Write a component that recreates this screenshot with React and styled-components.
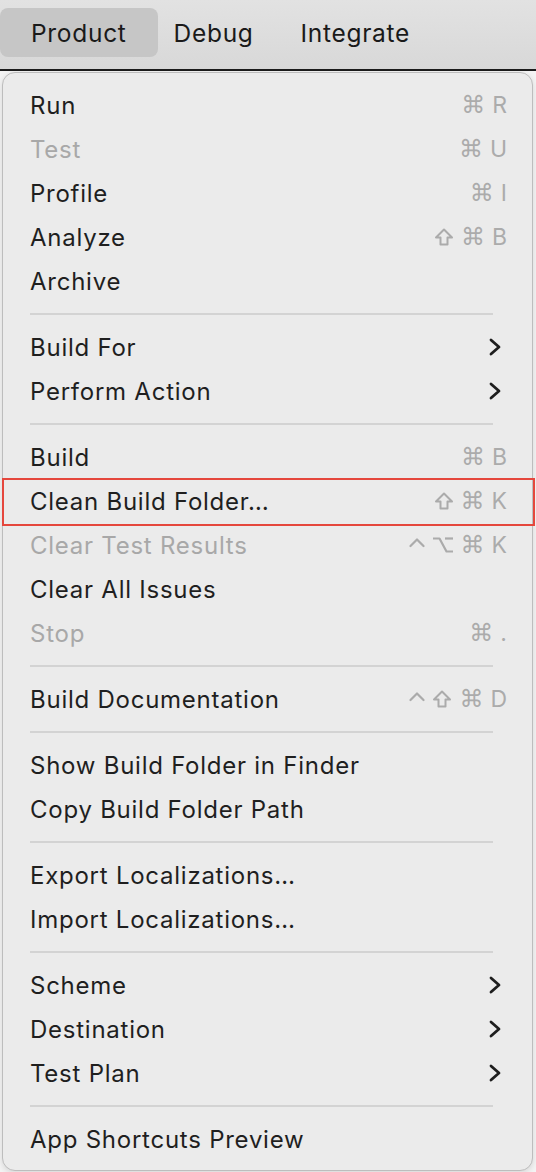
import React from "react";
import styled, { createGlobalStyle } from "styled-components";

const Global = createGlobalStyle`
  html, body { margin: 0; padding: 0; }
  body {
    background: #f4f4f4;
    font-family: Inter, "Noto Sans", "Liberation Sans", sans-serif;
    -webkit-font-smoothing: antialiased;
  }
`;

const Page = styled.div`
  width: 536px;
  height: 1172px;
  overflow: hidden;
  display: flex;
  flex-direction: column;
  background: #f4f4f4;
`;

const MenuBar = styled.div`
  height: 71px;
  flex: none;
  display: flex;
  align-items: flex-start;
  background: linear-gradient(#e2e2e2, #d8d8d8);
  border-bottom: 2px solid #1c1c1c;
  box-sizing: border-box;
  padding-top: 8px;
`;

const BarItem = styled.div`
  height: 49px;
  display: flex;
  align-items: center;
  padding: 0 ${(p) => p.$pad}px;
  margin-left: ${(p) => p.$gap}px;
  border-radius: 8px;
  font-size: 24.5px;
  color: #1a1a1a;
  letter-spacing: 0.7px;
  background: ${(p) => (p.$active ? "#c6c6c6" : "transparent")};
`;

const Panel = styled.div`
  margin: 1px 0 0 2px;
  width: 531px;
  box-sizing: border-box;
  background: #ebebeb;
  border: 1px solid #bdbdbd;
  border-radius: 13px;
  padding: 10px 0 9px;
  display: flex;
  flex-direction: column;
  box-shadow: 0 2px 6px rgba(0, 0, 0, 0.12);
`;

const Row = styled.div`
  position: relative;
  height: 44px;
  display: flex;
  align-items: center;
  padding: 0 25px 0 27px;
  font-size: 24px;
  letter-spacing: 0.75px;
  color: ${(p) => (p.$disabled ? "#a8a8a8" : "#1f1f1f")};
  &::after {
    content: "";
    display: ${(p) => (p.$marked ? "block" : "none")};
    position: absolute;
    left: -1px;
    right: -3px;
    top: -1px;
    bottom: -3px;
    border: 2px solid #e5473d;
  }
`;

const Label = styled.span`
  flex: 1;
  white-space: nowrap;
`;

const Shortcut = styled.span`
  display: flex;
  align-items: center;
  gap: 7px;
  color: #ababab;
  font-size: 23px;
  letter-spacing: 0;
`;

const Glyph = styled.span`
  font-family: "DejaVu Sans", sans-serif;
  font-size: ${(p) => p.$size || 20}px;
  line-height: 1;
`;

const Separator = styled.div`
  height: 2px;
  margin: 10px 39px 10px 27px;
  background: #d3d3d3;
`;

const Chevron = () => (
  <svg width="14" height="20" viewBox="0 0 14 20" style={{ marginRight: 5 }}>
    <polyline
      points="3,3 11,10 3,17"
      fill="none"
      stroke="#1e1e1e"
      strokeWidth="2.8"
      strokeLinecap="round"
      strokeLinejoin="round"
    />
  </svg>
);

const ShiftIcon = () => (
  <svg width="20" height="20" viewBox="0 0 20 20">
    <path
      d="M10 2.5 L18 10.5 H13.5 V17.5 H6.5 V10.5 H2 Z"
      fill="none"
      stroke="#ababab"
      strokeWidth="2"
      strokeLinejoin="round"
    />
  </svg>
);

const CtrlIcon = () => (
  <svg width="16" height="20" viewBox="0 0 16 20">
    <polyline
      points="1.5,11 8,4.5 14.5,11"
      fill="none"
      stroke="#ababab"
      strokeWidth="2.2"
      strokeLinecap="round"
      strokeLinejoin="round"
    />
  </svg>
);

const OptIcon = () => (
  <svg width="22" height="20" viewBox="0 0 22 20">
    <polyline
      points="1,3.5 7.5,3.5 14.5,16.5 21,16.5"
      fill="none"
      stroke="#ababab"
      strokeWidth="2.2"
      strokeLinejoin="round"
    />
    <line x1="13" y1="3.5" x2="21" y2="3.5" stroke="#ababab" strokeWidth="2.2" />
  </svg>
);

const keyFor = (k, i) => {
  if (k === "shift") return <ShiftIcon key={i} />;
  if (k === "cmd") return <Glyph key={i} $size={24}>⌘</Glyph>;
  if (k === "opt") return <OptIcon key={i} />;
  if (k === "ctrl") return <CtrlIcon key={i} />;
  return <span key={i}>{k}</span>;
};

const groups = [
  [
    { label: "Run", keys: ["cmd", "R"] },
    { label: "Test", keys: ["cmd", "U"], disabled: true },
    { label: "Profile", keys: ["cmd", "I"] },
    { label: "Analyze", keys: ["shift", "cmd", "B"] },
    { label: "Archive" },
  ],
  [
    { label: "Build For", sub: true },
    { label: "Perform Action", sub: true },
  ],
  [
    { label: "Build", keys: ["cmd", "B"] },
    { label: "Clean Build Folder…", keys: ["shift", "cmd", "K"], marked: true },
    { label: "Clear Test Results", keys: ["ctrl", "opt", "cmd", "K"], disabled: true },
    { label: "Clear All Issues" },
    { label: "Stop", keys: ["cmd", "."], disabled: true },
  ],
  [{ label: "Build Documentation", keys: ["ctrl", "shift", "cmd", "D"] }],
  [
    { label: "Show Build Folder in Finder" },
    { label: "Copy Build Folder Path" },
  ],
  [
    { label: "Export Localizations…" },
    { label: "Import Localizations…" },
  ],
  [
    { label: "Scheme", sub: true },
    { label: "Destination", sub: true },
    { label: "Test Plan", sub: true },
  ],
  [{ label: "App Shortcuts Preview" }],
];

export default function App() {
  return (
    <Page>
      <Global />
      <MenuBar>
        <BarItem $active $pad={31} $gap={0}>Product</BarItem>
        <BarItem $pad={16} $gap={0}>Debug</BarItem>
        <BarItem $pad={0} $gap={31}>Integrate</BarItem>
      </MenuBar>
      <Panel>
        {groups.map((g, gi) => (
          <React.Fragment key={gi}>
            {gi > 0 && <Separator />}
            {g.map((item) => (
              <Row key={item.label} $disabled={item.disabled} $marked={item.marked}>
                <Label>{item.label}</Label>
                {item.keys && <Shortcut>{item.keys.map(keyFor)}</Shortcut>}
                {item.sub && <Chevron />}
              </Row>
            ))}
          </React.Fragment>
        ))}
      </Panel>
    </Page>
  );
}
